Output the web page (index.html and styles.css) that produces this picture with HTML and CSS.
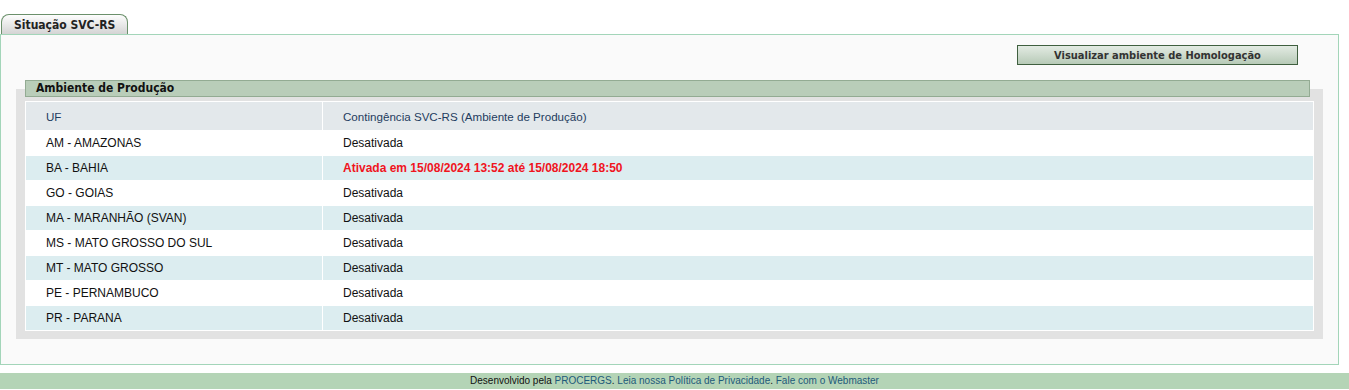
FILE: index.html
```html
<!DOCTYPE html>
<html lang="pt-BR">
<head>
<meta charset="utf-8">
<title>Situação SVC-RS</title>
<link rel="stylesheet" href="styles.css">
</head>
<body>
<div class="wrap">
  <div class="tabs"><div class="tab">Situação SVC-RS</div></div>
  <div class="panel">
    <div class="actions"><button class="btn">Visualizar ambiente de Homologação</button></div>
    <div class="section-title">Ambiente de Produção</div>
    <div class="box">
      <table class="grid">
        <thead>
          <tr><th class="c1">UF</th><th>Contingência SVC-RS (Ambiente de Produção)</th></tr>
        </thead>
        <tbody>
          <tr><td>AM - AMAZONAS</td><td>Desativada</td></tr>
          <tr class="alt"><td>BA - BAHIA</td><td class="on">Ativada em 15/08/2024 13:52 até 15/08/2024 18:50</td></tr>
          <tr><td>GO - GOIAS</td><td>Desativada</td></tr>
          <tr class="alt"><td>MA - MARANHÃO (SVAN)</td><td>Desativada</td></tr>
          <tr><td>MS - MATO GROSSO DO SUL</td><td>Desativada</td></tr>
          <tr class="alt"><td>MT - MATO GROSSO</td><td>Desativada</td></tr>
          <tr><td>PE - PERNAMBUCO</td><td>Desativada</td></tr>
          <tr class="alt"><td>PR - PARANA</td><td>Desativada</td></tr>
        </tbody>
      </table>
    </div>
  </div>
</div>
<div class="footer">Desenvolvido pela <a href="#">PROCERGS</a>. <a href="#">Leia nossa Política de Privacidade</a>. <a href="#">Fale com o Webmaster</a></div>
</body>
</html>
```
FILE: styles.css
```css
html, body { margin: 0; padding: 0; background: #fff; }
body { font-family: "Liberation Sans", Arial, sans-serif; }
.wrap { padding: 14px 10px 0 0; }
.tabs { display: flex; padding-left: 1px; }
.tab {
  width: 127px;
  height: 20px;
  box-sizing: border-box;
  border: 1px solid #6b906b;
  border-bottom: none;
  border-radius: 8px 8px 0 0;
  background: linear-gradient(#fdfdfd, #d4d4d4);
  font-family: "DejaVu Sans Condensed", "DejaVu Sans", Verdana, sans-serif;
  font-weight: bold;
  font-size: 12px;
  color: #222;
  padding: 2px 0 0 12px;
  line-height: 16px;
}
.panel {
  border: 1px solid #a3d5b9;
  background: #fafafa;
  padding: 10px 15px 25px 15px;
  height: 294px;
}
.actions { display: flex; justify-content: flex-end; padding-right: 25px; }
.btn {
  width: 281px;
  height: 20px;
  border: 1px solid #3f5f3f;
  background: linear-gradient(#e3ebe3, #b7cab7);
  font-family: "DejaVu Sans Condensed", "DejaVu Sans", Verdana, sans-serif;
  font-weight: bold;
  font-size: 11px;
  color: #333;
  padding: 0;
  margin: 0;
}
.section-title {
  margin: 15px 13px 0 9px;
  height: 17px;
  box-sizing: border-box;
  border: 1px solid #93ab93;
  background: #b9cdb9;
  font-family: "DejaVu Sans Condensed", "DejaVu Sans", Verdana, sans-serif;
  font-weight: bold;
  font-size: 12px;
  line-height: 15px;
  color: #111;
  padding-left: 10px;
  position: relative;
  z-index: 1;
}
.box {
  margin-top: -8px;
  background: #e2e2e2;
  padding: 12px 9px 8px 9px;
}
.grid {
  width: 100%;
  border-collapse: separate;
  border-spacing: 1px;
  background: #fff;
}
.grid th {
  background: #e3e8eb;
  color: #1e3c60;
  font-weight: normal;
  font-size: 11.6px;
  text-align: left;
  height: 28px;
  padding: 0 0 0 20px;
}
.grid th.c1 { width: 276px; }
.grid td {
  font-size: 12px;
  color: #111;
  height: 24px;
  padding: 0 0 0 20px;
  background: #fff;
}
.grid tr.alt td { background: #dcedf0; }
.grid td.on { color: #f0141e; font-weight: bold; }
.footer {
  margin-top: 8px;
  background: #b4d4b6;
  height: 16px;
  line-height: 16px;
  text-align: center;
  font-size: 10px;
  color: #111;
}
.footer a { color: #1d5a7a; text-decoration: none; }
```
